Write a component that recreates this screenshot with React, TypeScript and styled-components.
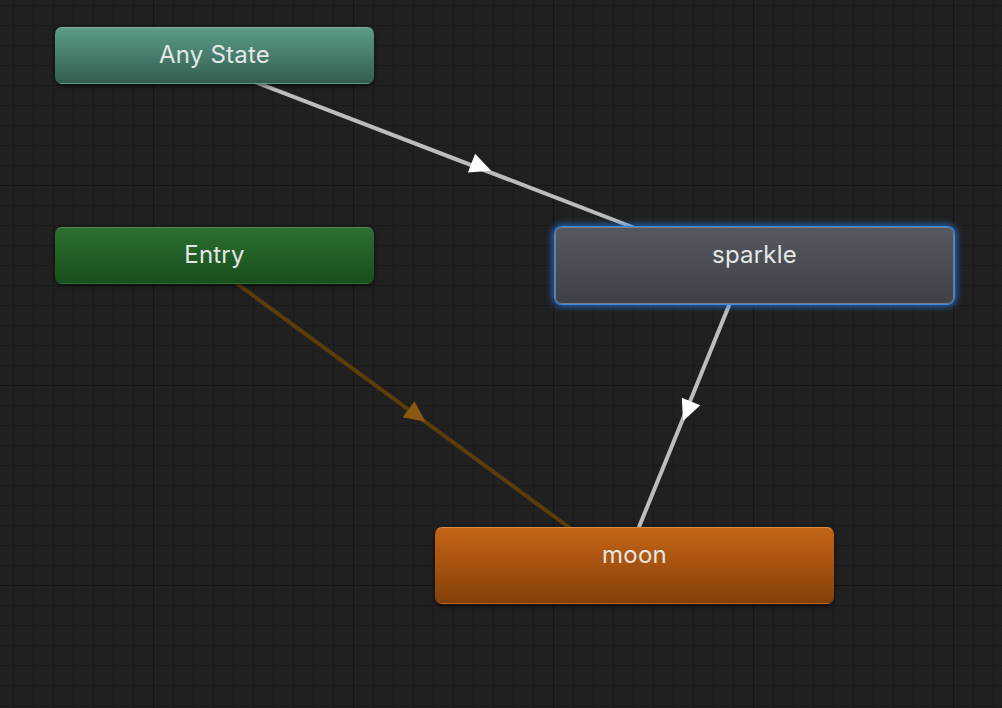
import React from 'react';
import styled, { createGlobalStyle, css } from 'styled-components';

const GlobalStyle = createGlobalStyle`
  html, body {
    margin: 0;
    padding: 0;
    background: #202020;
    overflow: hidden;
  }
  body {
    font-family: Inter, "Noto Sans", "Liberation Sans", sans-serif;
  }
`;

type Kind = 'any' | 'entry' | 'state' | 'default';

interface GraphNode {
  id: string;
  label: string;
  kind: Kind;
  x: number;
  y: number;
  w: number;
  h: number;
  selected?: boolean;
}

interface Edge {
  from: [number, number];
  to: [number, number];
  arrow: [number, number];
  color: string;
  head: string;
}

const nodes: GraphNode[] = [
  { id: 'any', label: 'Any State', kind: 'any', x: 55, y: 27, w: 319, h: 57 },
  { id: 'entry', label: 'Entry', kind: 'entry', x: 55, y: 227, w: 319, h: 57 },
  { id: 'sparkle', label: 'sparkle', kind: 'state', x: 555, y: 227, w: 399, h: 77, selected: true },
  { id: 'moon', label: 'moon', kind: 'default', x: 435, y: 527, w: 399, h: 77 },
];

const edges: Edge[] = [
  { from: [250, 80], to: [640, 230], arrow: [479, 166], color: '#bdbdbd', head: '#ffffff' },
  { from: [232, 280], to: [574, 531], arrow: [415, 414], color: '#5c3c0b', head: '#8a5810' },
  { from: [732, 298], to: [637, 532], arrow: [688, 409], color: '#bdbdbd', head: '#ffffff' },
];

const Canvas = styled.div`
  position: relative;
  width: 1002px;
  height: 708px;
  overflow: hidden;
  background-color: #202020;
  background-image:
    linear-gradient(to right, #141414 1px, transparent 1px),
    linear-gradient(to bottom, #141414 1px, transparent 1px),
    linear-gradient(to right, #1a1a1a 1px, transparent 1px),
    linear-gradient(to bottom, #1a1a1a 1px, transparent 1px);
  background-size: 200px 200px, 200px 200px, 20px 20px, 20px 20px;
  background-position: 153px 185px, 153px 185px, 13px 5px, 13px 5px;
`;

const EdgeLayer = styled.svg`
  position: absolute;
  inset: 0;
  width: 100%;
  height: 100%;
`;

const kindStyles = {
  any: css`
    background: linear-gradient(to bottom, #5b9c86 0%, #467d6c 50%, #335c51 100%);
    border-top-color: #7ab3a0;
  `,
  entry: css`
    background: linear-gradient(to bottom, #2d6f31 0%, #215f25 50%, #184e1b 100%);
    border-top-color: #4d8a50;
  `,
  state: css`
    background: linear-gradient(to bottom, #55585e 0%, #494c52 50%, #3e4147 100%);
    border-color: #7a7d83;
  `,
  default: css`
    background: linear-gradient(to bottom, #c46516 0%, #a6520f 50%, #824009 100%);
    border-top-color: #d98a45;
  `,
};

const Node = styled.div<{ $kind: Kind; $selected?: boolean }>`
  position: absolute;
  box-sizing: border-box;
  border-radius: 7px;
  border: 1px solid transparent;
  padding-top: 13px;
  text-align: center;
  color: #e6e6e6;
  font-size: 24px;
  font-weight: 400;
  line-height: 28px;
  letter-spacing: 0.2px;
  box-shadow: 0 2px 4px rgba(0, 0, 0, 0.55);
  ${({ $kind }) => kindStyles[$kind]}
  ${({ $selected }) =>
    $selected &&
    css`
      box-shadow: 0 0 0 1px #3c8ae4, 0 0 6px 3px rgba(44, 122, 228, 0.7);
    `}
`;

function arrowHead(edge: Edge) {
  const dx = edge.to[0] - edge.from[0];
  const dy = edge.to[1] - edge.from[1];
  const len = Math.hypot(dx, dy);
  const ux = dx / len;
  const uy = dy / len;
  const px = -uy;
  const py = ux;
  const [cx, cy] = edge.arrow;
  const tip = [cx + ux * 13, cy + uy * 13];
  const b1 = [cx - ux * 8 + px * 10, cy - uy * 8 + py * 10];
  const b2 = [cx - ux * 8 - px * 10, cy - uy * 8 - py * 10];
  return `${tip[0]},${tip[1]} ${b1[0]},${b1[1]} ${b2[0]},${b2[1]}`;
}

const App = () => {
  return (
    <>
      <GlobalStyle />
      <Canvas>
        <EdgeLayer viewBox="0 0 1002 708">
          {edges.map((edge, i) => (
            <g key={i}>
              <line
                x1={edge.from[0]}
                y1={edge.from[1]}
                x2={edge.to[0]}
                y2={edge.to[1]}
                stroke={edge.color}
                strokeWidth={4}
              />
              <polygon points={arrowHead(edge)} fill={edge.head} />
            </g>
          ))}
        </EdgeLayer>
        {nodes.map((n) => (
          <Node
            key={n.id}
            $kind={n.kind}
            $selected={n.selected}
            style={{ left: n.x, top: n.y, width: n.w, height: n.h }}
          >
            {n.label}
          </Node>
        ))}
      </Canvas>
    </>
  );
};

export default App;
